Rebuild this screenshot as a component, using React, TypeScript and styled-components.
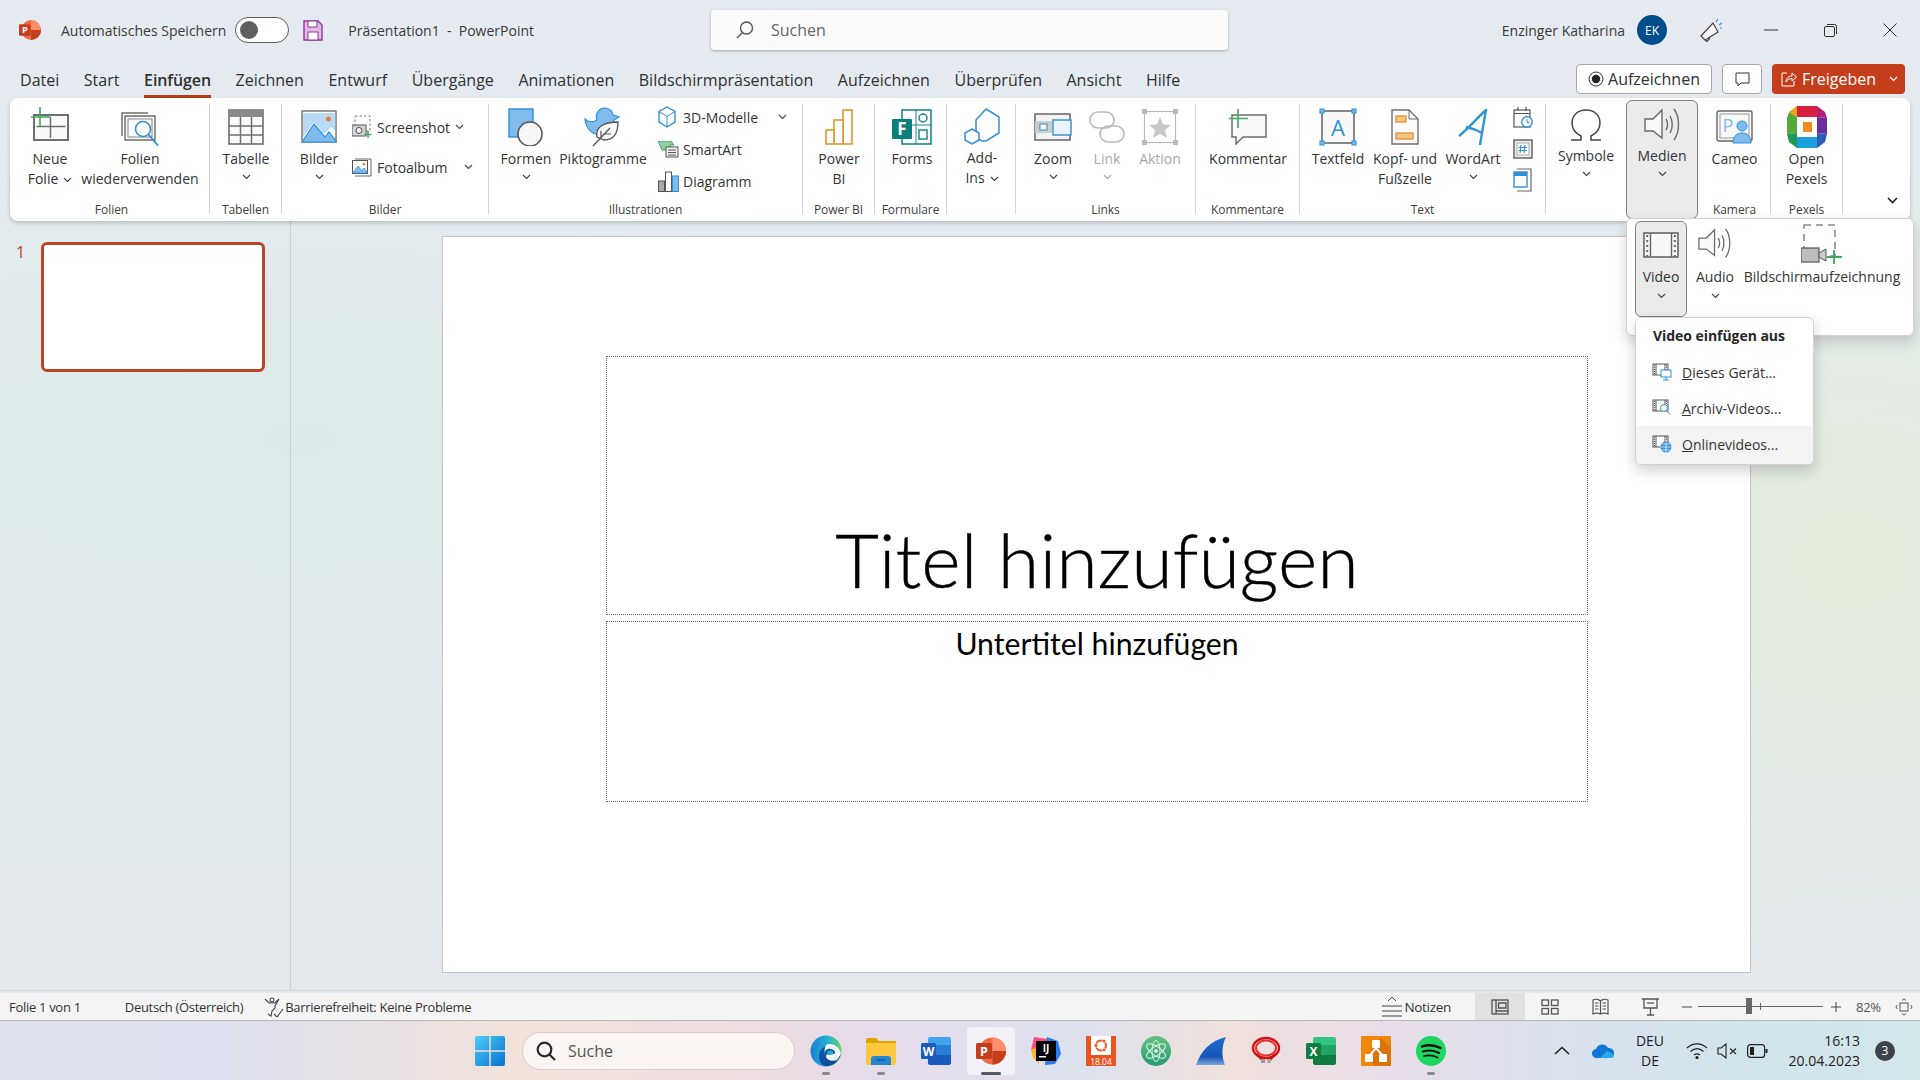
import React from 'react';
import styled, { createGlobalStyle } from 'styled-components';

const Global = createGlobalStyle`
  html, body { margin: 0; padding: 0; width: 1920px; height: 1080px; overflow: hidden; }
  * { box-sizing: border-box; }
`;

const UI = `"Open Sans", "Noto Sans", "Liberation Sans", sans-serif`;
const GRAY = '#6f6f6f';
const BLUE = '#2f8fd8';
const LBLUE = '#7fbcec';
const GREEN = '#3fa85f';

const Page = styled.div`
  position: relative;
  width: 1920px;
  height: 1080px;
  display: flex;
  flex-direction: column;
  overflow: hidden;
  font-family: ${UI};
  color: #2f2f2f;
  background:
    radial-gradient(ellipse 500px 420px at 1850px 560px, #e4ecdc 0%, rgba(228,236,220,0) 100%),
    radial-gradient(ellipse 800px 300px at 300px 440px, #deeaea 0%, rgba(222,234,234,0) 100%),
    linear-gradient(180deg, #e5ebf0 0%, #e1eaee 50%, #e3e8ec 100%);
`;

const TitleBar = styled.header`
  height: 60px;
  display: flex;
  align-items: center;
  padding-left: 19px;
  font-size: 14px;
  flex: none;
`;
const TitleText = styled.span<{ $ml?: number; $mr?: number }>`
  margin-left: ${p => p.$ml ?? 0}px;
  margin-right: ${p => p.$mr ?? 0}px;
  color: #3a3a3a;
  white-space: pre;
`;
const Toggle = styled.span`
  margin-left: 9px;
  width: 54px;
  height: 26px;
  border-radius: 13px;
  border: 1px solid #5c5c5c;
  background: #fff;
  padding: 3px 4px;
  display: flex;
`;
const ToggleKnob = styled.span`
  width: 18px;
  height: 18px;
  border-radius: 50%;
  background: #5f5f5f;
`;
const SaveSlot = styled.span`
  margin-left: 14px;
  display: flex;
`;
const SearchBox = styled.div`
  margin-left: 177px;
  width: 517px;
  height: 40px;
  background: #fbfbfb;
  border-radius: 4px;
  box-shadow: 0 1px 3px rgba(0,0,0,.28);
  display: flex;
  align-items: center;
  padding-left: 25px;
  gap: 17px;
  font-size: 16px;
  color: #666;
`;
const UserArea = styled.div`
  margin-left: auto;
  display: flex;
  align-items: center;
  padding-right: 23px;
`;
const UserName = styled.span`
  color: #3a3a3a;
`;
const Avatar = styled.span`
  margin-left: 12px;
  width: 30px;
  height: 30px;
  border-radius: 50%;
  background: #004e8c;
  color: #fff;
  display: flex;
  align-items: center;
  justify-content: center;
  font-size: 12px;
`;
const WinBtn = styled.span<{ $w: number; $ml: number }>`
  width: ${p => p.$w}px;
  margin-left: ${p => p.$ml}px;
  display: flex;
  justify-content: center;
`;

const TabRow = styled.nav`
  height: 38px;
  display: flex;
  align-items: flex-start;
  padding-left: 20px;
  flex: none;
`;
const Tab = styled.span<{ $on?: boolean }>`
  margin-top: 6px;
  margin-right: 24.5px;
  height: 29px;
  box-sizing: content-box;
  border-bottom: 3px solid ${p => (p.$on ? '#b83c1a' : 'transparent')};
  font-size: 16px;
  line-height: 28px;
  font-weight: ${p => (p.$on ? 600 : 400)};
  letter-spacing: ${p => (p.$on ? '-0.1px' : '0.02px')};
  color: #303030;
  white-space: nowrap;
`;
const TabActions = styled.div`
  margin-left: auto;
  margin-top: 4px;
  margin-right: 15px;
  display: flex;
  gap: 10px;
`;
const GhostBtn = styled.span<{ $w: number }>`
  width: ${p => p.$w}px;
  height: 30px;
  background: #fff;
  border: 1px solid #a9a9a9;
  border-radius: 4px;
  display: flex;
  align-items: center;
  justify-content: center;
  gap: 4px;
  font-size: 16px;
  color: #303030;
`;
const ShareBtn = styled.span`
  width: 133px;
  height: 30px;
  background: #c43e1c;
  border-radius: 4px;
  display: flex;
  align-items: center;
  padding-left: 9px;
  gap: 5px;
  font-size: 16px;
  color: #fff;
`;
const ShareChevron = styled.span`
  margin-left: auto;
  margin-right: 7px;
  display: flex;
`;

const Ribbon = styled.section`
  margin-left: 10px;
  width: 1900px;
  height: 123px;
  flex: none;
  background: #fff;
  border-radius: 8px;
  box-shadow: 0 2px 4px rgba(0,0,0,.2);
  display: flex;
  padding-top: 6px;
  position: relative;
  z-index: 1;
`;
const Group = styled.div<{ $w: number; $plain?: boolean }>`
  width: ${p => p.$w}px;
  height: 110px;
  flex: none;
  display: flex;
  flex-direction: column;
  border-right: ${p => (p.$plain ? 'none' : '1px solid #d4d4d4')};
`;
const GroupBody = styled.div<{ $pl?: number; $gap?: number }>`
  height: 100px;
  display: flex;
  align-items: flex-start;
  padding-left: ${p => p.$pl ?? 0}px;
  gap: ${p => p.$gap ?? 0}px;
`;
const GroupLabel = styled.div<{ $pl?: number }>`
  margin-top: 1px;
  padding-left: ${p => p.$pl ?? 0}px;
  height: 9px;
  line-height: 10px;
  font-size: 12px;
  letter-spacing: -0.05px;
  text-align: center;
  white-space: nowrap;
  color: #3d3d3d;
`;
const LargeBtn = styled.div<{ $w: number; $off?: boolean; $ml?: number; $active?: boolean }>`
  width: ${p => p.$w}px;
  flex: none;
  margin-left: ${p => p.$ml ?? 0}px;
  display: flex;
  flex-direction: column;
  align-items: center;
  font-size: 14px;
  line-height: 20px;
  text-align: center;
  white-space: nowrap;
  color: ${p => (p.$off ? '#a8a8a8' : '#333')};
  ${p => p.$active ? `
    margin-top: -4px;
    height: 119px;
    padding-top: 3px;
    background: #ebebeb;
    border: 1px solid #808080;
    border-radius: 6px;
  ` : ''}
`;
const IconBox = styled.div<{ $h?: number }>`
  height: ${p => p.$h ?? 45}px;
  display: flex;
  align-items: center;
  justify-content: center;
`;
const ChevronLine = styled.div<{ $h?: number }>`
  height: ${p => p.$h ?? 16}px;
  display: flex;
  align-items: center;
  justify-content: center;
`;
const InlineChev = styled.span<{ $ml?: number }>`
  display: inline-flex;
  margin-left: ${p => p.$ml ?? 5}px;
  vertical-align: middle;
`;
const SmallCol = styled.div<{ $gap: number; $pt: number; $ml?: number }>`
  display: flex;
  flex-direction: column;
  gap: ${p => p.$gap}px;
  padding-top: ${p => p.$pt}px;
  margin-left: ${p => p.$ml ?? 0}px;
`;
const SmallBtn = styled.div<{ $h: number; $w?: number }>`
  height: ${p => p.$h}px;
  width: ${p => (p.$w ? `${p.$w}px` : 'auto')};
  display: flex;
  align-items: center;
  font-size: 14px;
  white-space: nowrap;
  color: #333;
`;
const SmallIcon = styled.span`
  width: 25px;
  flex: none;
  display: flex;
`;
const PushRight = styled.span`
  margin-left: auto;
  display: flex;
`;
const CollapseSlot = styled.div`
  flex: 1;
  display: flex;
  justify-content: flex-end;
  align-items: flex-end;
  padding: 0 12px 10px 0;
  height: 110px;
`;

const Workspace = styled.main`
  height: 770px;
  flex: none;
  display: flex;
  border-bottom: 1px solid #cfd4d8;
`;
const ThumbPane = styled.aside`
  width: 291px;
  flex: none;
  border-right: 1px solid #cbcfd1;
  display: flex;
  align-items: flex-start;
  padding: 21px 0 0 16px;
  gap: 18px;
`;
const ThumbNum = styled.span`
  color: #c43e1c;
  font-size: 16px;
  line-height: 20px;
  width: 7px;
`;
const Thumb = styled.div`
  width: 224px;
  height: 130px;
  background: #fff;
  border: 3px solid #bc4526;
  border-radius: 6px;
`;
const Stage = styled.div`
  flex: 1;
  padding: 15px 0 0 151px;
`;
const Slide = styled.div`
  width: 1309px;
  height: 737px;
  background: #fff;
  border: 1px solid #c2c4c6;
  padding: 119px 0 0 163px;
  display: flex;
  flex-direction: column;
  gap: 6px;
`;
const Placeholder = styled.div<{ $h: number }>`
  width: 982px;
  height: ${p => p.$h}px;
  border: 1px dotted #666;
  display: flex;
  flex-direction: column;
  align-items: center;
  color: #000;
  white-space: nowrap;
`;
const SlideTitle = styled.div`
  margin-top: auto;
  margin-bottom: 10px;
  font-family: Lato, "Open Sans", sans-serif;
  font-weight: 300;
  font-size: 75.5px;
  line-height: 90px;
  -webkit-text-stroke: 0.4px #000;
`;
const SlideSub = styled.div`
  margin-top: 1px;
  font-family: Lato, "Open Sans", sans-serif;
  font-size: 30.2px;
  line-height: 40px;
`;

const StatusBar = styled.footer`
  margin-top: 2px;
  height: 28px;
  flex: none;
  background: #f4f4f4;
  border-bottom: 1px solid #b9b9b9;
  display: flex;
  align-items: center;
  font-size: 13px;
  letter-spacing: -0.3px;
  color: #333;
`;
const StatusText = styled.span<{ $ml: number }>`
  margin-left: ${p => p.$ml}px;
  white-space: nowrap;
  display: flex;
`;
const StatusRight = styled.div`
  margin-left: auto;
  display: flex;
  align-items: center;
  height: 100%;
  padding-right: 7px;
`;
const NotesBtn = styled.span`
  display: flex;
  align-items: center;
  gap: 2px;
  margin-right: 24px;
  font-size: 13.5px;
`;
const ViewBtn = styled.span<{ $on?: boolean }>`
  width: 50px;
  height: 100%;
  display: flex;
  align-items: center;
  justify-content: center;
  background: ${p => (p.$on ? '#e1e1e1' : 'transparent')};
`;
const ZoomTrack = styled.span`
  position: relative;
  margin: 0 8px 0 6px;
  width: 125px;
  height: 1px;
  background: #666;
`;
const ZoomThumb = styled.span`
  position: absolute;
  left: 48px;
  top: -8px;
  width: 6px;
  height: 16px;
  background: #666;
`;
const ZoomTick = styled.span`
  position: absolute;
  left: 62px;
  top: -3px;
  width: 1px;
  height: 7px;
  background: #666;
`;
const ZoomPct = styled.span`
  width: 24px;
  margin-left: 15px;
  margin-right: 15px;
  color: #555;
  white-space: nowrap;
`;
const Sign = styled.span<{ $ml?: number }>`
  display: flex;
  margin-left: ${p => p.$ml ?? 0}px;
`;

const Taskbar = styled.div`
  height: 59px;
  flex: none;
  display: flex;
  align-items: center;
  padding: 0 25px 0 466px;
  background: linear-gradient(90deg, #dfe0ee 0%, #dde0ee 12%, #f2e2da 27%, #efdde0 38%, #e6dcec 46%, #dde2ef 56%, #f0e1dc 64%, #e9dde9 72%, #dbe1ec 80%, #d0e4ec 92%, #d3e6ea 100%);
`;
const TaskTile = styled.span<{ $on?: boolean; $mr?: number }>`
  position: relative;
  width: 48px;
  height: 48px;
  margin-right: ${p => p.$mr ?? 7}px;
  flex: none;
  display: flex;
  align-items: center;
  justify-content: center;
  border-radius: 4px;
  background: ${p => (p.$on ? 'rgba(255,255,255,.55)' : 'transparent')};
`;
const RunDot = styled.span<{ $on?: boolean }>`
  position: absolute;
  left: 50%;
  bottom: 0;
  transform: translateX(-50%);
  width: ${p => (p.$on ? 20 : 8)}px;
  height: 3px;
  border-radius: 2px;
  background: ${p => (p.$on ? '#4f5b62' : '#84898c')};
`;
const TaskSearch = styled.div`
  width: 273px;
  height: 38px;
  border-radius: 19px;
  background: #faf4f3;
  border: 1px solid #d8cdcd;
  display: flex;
  align-items: center;
  padding-left: 13px;
  gap: 12px;
  font-size: 16px;
  color: #555;
  margin-right: 7px;
  flex: none;
`;
const Tray = styled.div`
  margin-left: auto;
  display: flex;
  align-items: center;
  color: #222;
`;
const TrayItem = styled.span<{ $w: number; $ml?: number }>`
  width: ${p => p.$w}px;
  margin-left: ${p => p.$ml ?? 0}px;
  display: flex;
  justify-content: center;
`;
const Lang = styled.span`
  width: 44px;
  margin-left: 5px;
  margin-right: 10px;
  text-align: center;
  font-size: 14px;
  line-height: 20px;
`;
const Clock = styled.span`
  width: 88px;
  text-align: right;
  font-size: 14px;
  line-height: 20px;
`;
const Badge = styled.span`
  margin-left: 15px;
  width: 20px;
  height: 20px;
  border-radius: 50%;
  background: #3c4248;
  color: #fff;
  font-size: 12px;
  display: flex;
  align-items: center;
  justify-content: center;
`;

const MediaFlyout = styled.div`
  position: absolute;
  left: 1626px;
  top: 218px;
  width: 288px;
  height: 118px;
  background: #fff;
  border: 1px solid #d2d2d2;
  border-radius: 6px;
  box-shadow: 0 6px 14px rgba(0,0,0,.16);
  display: flex;
  padding: 2px 0 0 8px;
  z-index: 2;
`;
const FlyBtn = styled.div<{ $w: number; $on?: boolean; $ml?: number }>`
  width: ${p => p.$w}px;
  margin-left: ${p => p.$ml ?? 0}px;
  height: 96px;
  display: flex;
  flex-direction: column;
  align-items: center;
  font-size: 14px;
  line-height: 20px;
  white-space: nowrap;
  color: #333;
  ${p => p.$on ? `
    background: #ebebeb;
    border: 1px solid #808080;
    border-radius: 6px;
  ` : ''}
`;
const VideoMenu = styled.div`
  position: absolute;
  left: 1635px;
  top: 317px;
  width: 179px;
  height: 148px;
  background: #fff;
  border: 1px solid #d2d2d2;
  border-radius: 6px;
  box-shadow: 0 6px 14px rgba(0,0,0,.18);
  z-index: 3;
  overflow: hidden;
`;
const MenuHead = styled.div`
  height: 36px;
  padding: 7px 0 0 17px;
  font-size: 14px;
  line-height: 22px;
  font-weight: 700;
  letter-spacing: -0.05px;
  color: #262626;
  white-space: nowrap;
`;
const MenuItem = styled.div<{ $on?: boolean }>`
  height: ${p => (p.$on ? 38 : 36)}px;
  padding: 0 0 ${p => (p.$on ? 2 : 0)}px 16px;
  display: flex;
  align-items: center;
  font-size: 14px;
  color: #333;
  background: ${p => (p.$on ? '#f3f3f3' : 'transparent')};
  white-space: nowrap;
`;
const MenuIcon = styled.span`
  width: 30px;
  display: flex;
  flex: none;
`;
const Accel = styled.u`
  text-decoration: underline;
`;

/* ---------- icons ---------- */
const Chev = ({ c = '#444' }: { c?: string }) => (
  <svg width="9" height="6" viewBox="0 0 9 6"><path d="M1 1l3.5 3.5L8 1" fill="none" stroke={c} strokeWidth="1.1" /></svg>
);
const NewSlide = () => (
  <svg width="38" height="39" viewBox="0 0 38 39" fill="none">
    <rect x="3" y="8" width="34" height="25" fill="#fafafa" stroke={GRAY} strokeWidth="2" />
    <path d="M5.5 19.5H34.5M19.5 10V31" stroke={GRAY} strokeWidth="1.5" />
    <path d="M9 0V20M0 10H19" stroke={GREEN} strokeWidth="1.6" />
  </svg>
);
const Reuse = () => (
  <svg width="38" height="39" viewBox="0 0 38 39" fill="none">
    <path d="M1 29V6H27" stroke={GRAY} strokeWidth="1.5" />
    <rect x="4" y="9" width="30" height="24" fill="#f6f6f6" stroke={GRAY} strokeWidth="1.5" />
    <rect x="7" y="12" width="24" height="18" fill="#fff" stroke="#888" strokeWidth="1" />
    <circle cx="22" cy="22" r="7.5" fill="#fff" stroke={BLUE} strokeWidth="1.6" />
    <path d="M27.5 27.5L37 38.5" stroke={BLUE} strokeWidth="1.8" />
  </svg>
);
const TableIcon = () => (
  <svg width="36" height="36" viewBox="0 0 36 36" fill="none">
    <rect x="1" y="1" width="34" height="34" fill="#fbfbfb" stroke={GRAY} strokeWidth="1.6" />
    <rect x="1" y="1" width="34" height="7" fill="#8a8a8a" />
    <path d="M12.5 8V35M23.5 8V35M1 17H35M1 26H35" stroke={GRAY} strokeWidth="1.5" />
  </svg>
);
const PictureIcon = () => (
  <svg width="36" height="33" viewBox="0 0 36 33" fill="none">
    <rect x="1" y="1" width="34" height="31" fill="#fff" stroke={GRAY} strokeWidth="1.4" />
    <path d="M1 32L13 14L24 27L28 22L35 31V32Z" fill={LBLUE} stroke={BLUE} strokeWidth="1.2" />
    <path d="M2 27L13 12L23 24L30 17L35 22V3H2Z" fill={LBLUE} opacity=".55" />
    <circle cx="27.5" cy="9" r="2.4" fill="#e8791e" />
  </svg>
);
const ScreenshotIcon = () => (
  <svg width="20" height="24" viewBox="0 0 20 24" fill="none">
    <rect x="3" y="1" width="15" height="15" stroke="#777" strokeDasharray="2.5 2" />
    <rect x="0" y="10" width="14" height="11" fill="#d4d4d4" stroke="#555" />
    <circle cx="7" cy="15.5" r="3" fill="#fff" stroke="#444" />
    <path d="M16 16V23M12.5 19.5H19.5" stroke={GREEN} strokeWidth="1.4" />
  </svg>
);
const AlbumIcon = () => (
  <svg width="20" height="19" viewBox="0 0 20 19" fill="none">
    <path d="M3 1H19V18H3" stroke="#666" />
    <rect x="0.5" y="2.5" width="15" height="13" fill="#fff" stroke="#555" />
    <path d="M1 15L6 8L10 13L12 10L15 14V15Z" fill={LBLUE} stroke={BLUE} strokeWidth=".8" />
    <circle cx="12" cy="6" r="1.2" fill="#e8791e" />
  </svg>
);
const ShapesIcon = () => (
  <svg width="37" height="38" viewBox="0 0 37 38" fill="none">
    <rect x="1" y="1" width="24" height="28" fill={LBLUE} stroke={BLUE} strokeWidth="1.4" />
    <circle cx="22" cy="26" r="12" fill="#f6f6f6" stroke="#555" strokeWidth="1.6" />
  </svg>
);
const PictoIcon = () => (
  <svg width="38" height="40" viewBox="0 0 38 40" fill="none">
    <path d="M1 12C5 16 10 15 13 13C11 8 14 1 21 1C26 1 29 5 29 8L35 10L30 13C30 22 26 28 18 28C8 28 2 22 1 12Z" fill={LBLUE} stroke={BLUE} strokeWidth="1.2" />
    <path d="M13 30C11 20 20 15 34 15C34 27 30 33 20 33Z" fill="#f8f8f8" stroke="#555" strokeWidth="1.3" />
    <path d="M9 39L26 21M17 30V24M20 27H27" stroke="#555" strokeWidth="1.2" />
  </svg>
);
const CubeIcon = () => (
  <svg width="18" height="22" viewBox="0 0 18 22" fill="none" stroke={BLUE} strokeWidth="1.4">
    <path d="M9 1L17 5.5V16L9 21L1 16V5.5Z" /><path d="M1 5.5L9 10.5L17 5.5M9 10.5V21" strokeWidth="1" />
  </svg>
);
const SmartArtIcon = () => (
  <svg width="21" height="17" viewBox="0 0 21 17" fill="none">
    <path d="M0 0H13L16 4H12L13 9H4Z" fill="#8fce9f" stroke={GREEN} />
    <rect x="8" y="6" width="12" height="10" fill="#f4f4f4" stroke="#555" />
    <path d="M10 9H18M10 11.5H18M10 14H18" stroke="#555" />
  </svg>
);
const ChartIcon = () => (
  <svg width="21" height="21" viewBox="0 0 21 21" fill="none">
    <rect x="0.5" y="10" width="6" height="10.5" fill="#aaa" stroke="#555" />
    <rect x="7.5" y="1" width="6" height="19.5" fill="#fff" stroke="#555" />
    <rect x="14.5" y="5" width="6" height="15.5" fill={LBLUE} stroke={BLUE} />
  </svg>
);
const PowerBI = () => (
  <svg width="28" height="36" viewBox="0 0 28 36" fill="#fff" stroke="#e0982f" strokeWidth="1.6">
    <rect x="18" y="1" width="9" height="34" />
    <rect x="9" y="11" width="9" height="24" />
    <rect x="1" y="21" width="8" height="14" />
  </svg>
);
const FormsIcon = () => (
  <svg width="40" height="36" viewBox="0 0 40 36" fill="none">
    <rect x="10" y="1" width="29" height="34" fill="#fff" stroke="#1e8a85" strokeWidth="1.6" />
    <path d="M10 16H39M24 1V35" stroke="#1e8a85" strokeWidth="1" />
    <circle cx="31" cy="9" r="4" stroke="#1e8a85" strokeWidth="1.5" />
    <rect x="27" y="21" width="8" height="9" stroke="#1e8a85" strokeWidth="1.5" />
    <rect x="0" y="10" width="20" height="20" rx="1" fill="#07807e" />
    <text x="10" y="26" textAnchor="middle" fontFamily="Open Sans, sans-serif" fontSize="17" fontWeight="700" fill="#fff">F</text>
  </svg>
);
const AddIns = () => (
  <svg width="37" height="37" viewBox="0 0 37 37" fill="#fff" stroke={BLUE} strokeWidth="1.5">
    <path d="M22 1L35 9V25L22 33H18L12 29V12Z" />
    <path d="M8 21L15 25V32L8 36L1 32V25Z" />
  </svg>
);
const ZoomIcon = () => (
  <svg width="38" height="28" viewBox="0 0 38 28" fill="none">
    <rect x="1" y="1" width="35" height="26" fill="#f3f3f3" stroke={GRAY} strokeWidth="1.6" />
    <path d="M1 8L18 8L18 20L1 20" fill="#ccc" />
    <rect x="6" y="11" width="7" height="6" fill="#fff" stroke={BLUE} />
    <rect x="19" y="7" width="18" height="15" fill="#eaf4fc" stroke={BLUE} strokeWidth="1.4" />
  </svg>
);
const LinkIcon = () => (
  <svg width="36" height="32" viewBox="0 0 36 32" fill="none" stroke="#bbb" strokeWidth="1.6">
    <rect x="1" y="1" width="24" height="16" rx="8" />
    <rect x="11" y="15" width="24" height="16" rx="8" />
  </svg>
);
const ActionIcon = () => (
  <svg width="36" height="36" viewBox="0 0 36 36" fill="none">
    <rect x="2.5" y="2.5" width="31" height="31" stroke="#bbb" strokeWidth="1.2" />
    <path d="M0 0h5v5H0z M31 0h5v5h-5z M0 31h5v5H0z M31 31h5v5h-5z" fill="#bbb" />
    <path d="M18 8L21 15.5L29 16L23 21L25 29L18 25L11 29L13 21L7 16L15 15.5Z" fill="#c8c8c8" />
  </svg>
);
const CommentIcon = () => (
  <svg width="38" height="36" viewBox="0 0 38 36" fill="none">
    <path d="M3 6H37V28H14L7 35V28H3Z" fill="#fafafa" stroke={GRAY} strokeWidth="1.5" />
    <path d="M9 0V19M0 9.5H19" stroke={GREEN} strokeWidth="1.6" />
  </svg>
);
const TextBoxIcon = () => (
  <svg width="38" height="38" viewBox="0 0 38 38" fill="none">
    <rect x="3" y="3" width="32" height="32" fill="#f9f9f9" stroke="#555" strokeWidth="1.4" />
    <g fill={LBLUE} stroke={BLUE}><rect x="1" y="1" width="4" height="4" /><rect x="33" y="1" width="4" height="4" /><rect x="1" y="33" width="4" height="4" /><rect x="33" y="33" width="4" height="4" /></g>
    <text x="19" y="28" textAnchor="middle" fontFamily="Open Sans, sans-serif" fontSize="22" fill={BLUE}>A</text>
  </svg>
);
const HeaderIcon = () => (
  <svg width="28" height="36" viewBox="0 0 28 36" fill="none">
    <path d="M1 1H18L27 10V35H1Z" fill="#fbfbfb" stroke={GRAY} strokeWidth="1.4" />
    <path d="M18 1V10H27" stroke={GRAY} />
    <rect x="5" y="7" width="10" height="6" fill="#f6c680" stroke="#e0892a" strokeWidth="1.2" />
    <rect x="5" y="24" width="17" height="6" fill="#f6c680" stroke="#e0892a" strokeWidth="1.2" />
  </svg>
);
const WordArtIcon = () => (
  <svg width="30" height="36" viewBox="0 0 30 36" fill="none" stroke="#2e97d6" strokeWidth="2.4">
    <path d="M1 27C10 20 20 8 28 1C26 12 24 24 22 36" /><path d="M8 18C13 19 19 21 24 24" />
  </svg>
);
const CalendarIcon = () => (
  <svg width="20" height="22" viewBox="0 0 20 22" fill="none">
    <rect x="1" y="3" width="16" height="17" fill="#fff" stroke="#555" strokeWidth="1.2" />
    <path d="M1 6.5H17M5 0V4M13 0V4" stroke="#555" strokeWidth="1.2" />
    <circle cx="14" cy="15" r="5.2" fill="#fff" stroke={BLUE} strokeWidth="1.4" />
    <path d="M14 12V15.5H16.5" stroke={BLUE} />
  </svg>
);
const SlideNumIcon = () => (
  <svg width="20" height="20" viewBox="0 0 20 20" fill="none">
    <rect x="1" y="1" width="18" height="18" fill="#eee" stroke={GRAY} strokeWidth="1.6" />
    <rect x="4" y="4" width="12" height="12" fill="#fff" stroke="#aaa" />
    <path d="M8 6L7 14M12 6L11 14M5.5 8.5H14M5.5 11.5H14" stroke={BLUE} strokeWidth="1.2" />
  </svg>
);
const ObjectIcon = () => (
  <svg width="19" height="24" viewBox="0 0 19 24" fill="none">
    <path d="M4 1H18V23H4" stroke="#666" strokeWidth="1.2" />
    <rect x="1" y="4" width="13" height="15" fill="#fff" stroke={BLUE} strokeWidth="1.4" />
    <rect x="1" y="4" width="13" height="4" fill={BLUE} />
  </svg>
);
const OmegaIcon = () => (
  <svg width="32" height="32" viewBox="0 0 32 32" fill="none" stroke="#444" strokeWidth="1.5">
    <path d="M1 31H11V27C5 24 2 19 2 14C2 6 8 1 16 1C24 1 30 6 30 14C30 19 27 24 21 27V31H31" />
  </svg>
);
const SpeakerIcon = ({ s = 1 }: { s?: number }) => (
  <svg width={36 * s} height={36 * s} viewBox="0 0 36 36" fill="none" stroke="#6a6a6a" strokeWidth="1.4">
    <path d="M1 12H9L18 3V31L9 24H1Z" fill="#fafafa" />
    <path d="M22 12C24 15 24 20 22 23M26 9C29 14 29 21 26 26M30 2C36 10 36 25 30 33" />
  </svg>
);
const CameoIcon = () => (
  <svg width="38" height="34" viewBox="0 0 38 34" fill="none">
    <rect x="1" y="1" width="35" height="30" rx="2" fill="#f8f8f8" stroke="#666" strokeWidth="1.4" />
    <rect x="4" y="4" width="29" height="24" stroke="#999" />
    <text x="12" y="22" textAnchor="middle" fontFamily="Open Sans, sans-serif" fontSize="18" fill={LBLUE}>P</text>
    <circle cx="26" cy="16" r="5" fill={LBLUE} stroke={BLUE} />
    <path d="M17 33C17 26 21 23 26 23C31 23 35 26 35 33Z" fill={LBLUE} stroke={BLUE} />
  </svg>
);
const PexelsIcon = () => (
  <svg width="40" height="42" viewBox="0 0 40 42">
    <path d="M10 0H30L30 11H10Z" fill="#d81f3f" />
    <path d="M10 0L2 6L10 11Z" fill="#f0a21a" />
    <path d="M2 6L0 12V28L10 27V11Z" fill="#57a93a" />
    <path d="M0 28L2 36L10 42L12 31L10 27Z" fill="#1b9a59" />
    <path d="M10 42H30L30 31H10Z" fill="#1a9fdc" />
    <path d="M30 42L38 36L40 28L30 27Z" fill="#2d5cb8" />
    <path d="M40 28V12L30 11V27Z" fill="#6a2da0" />
    <path d="M30 0L38 6L40 12L30 11Z" fill="#b81f74" />
    <rect x="10" y="11" width="20" height="20" fill="#fff" />
    <rect x="16" y="16" width="9" height="10" fill="#f58a1f" />
  </svg>
);
const FilmIcon = () => (
  <svg width="36" height="26" viewBox="0 0 36 26" fill="none">
    <rect x="1" y="1" width="34" height="24" fill="#f7f7f7" stroke="#666" strokeWidth="1.6" />
    <path d="M7.5 1V25M28.5 1V25" stroke="#666" strokeWidth="1.4" />
    <path d="M4.2 3V25M31.8 3V25" stroke="#666" strokeWidth="2" strokeDasharray="2 3" />
  </svg>
);
const RecordIcon = () => (
  <svg width="42" height="40" viewBox="0 0 42 40" fill="none">
    <rect x="3" y="1" width="31" height="31" stroke="#8a8a8a" strokeWidth="1.6" strokeDasharray="7 5" />
    <rect x="0" y="24" width="18" height="14" fill="#bdbdbd" stroke="#555" strokeWidth="1.2" />
    <path d="M18 29L25 25V37L18 33Z" fill="#ccc" stroke="#555" />
    <path d="M33 26V40M26 33H41" stroke={GREEN} strokeWidth="1.8" />
  </svg>
);
const MiniFilm = ({ children }: { children: React.ReactNode }) => (
  <svg width="20" height="18" viewBox="0 0 20 18" fill="none">
    <rect x="1" y="1" width="15" height="11" fill="#fff" stroke="#555" />
    <path d="M4 1V12M13 1V12" stroke="#555" />
    <path d="M2.5 2V12M14.5 2V12" stroke="#555" strokeDasharray="1 1" />
    {children}
  </svg>
);
const Magnifier = ({ c = '#555', size = 18 }: { c?: string; size?: number }) => (
  <svg width={size} height={size} viewBox="0 0 18 18" fill="none" stroke={c} strokeWidth="1.4">
    <circle cx="10.5" cy="7" r="6" /><path d="M6.5 11.5L1 17" />
  </svg>
);

const WinLogo = () => (
  <svg width="30" height="30" viewBox="0 0 30 30">
    <defs><linearGradient id="w" x1="0" y1="0" x2="1" y2="1"><stop offset="0" stopColor="#4ecbfa" /><stop offset="1" stopColor="#0573cf" /></linearGradient></defs>
    <path d="M0 2a2 2 0 012-2H14.3V14.3H0zM15.7 0H28a2 2 0 012 2V14.3H15.7zM0 15.7H14.3V30H2a2 2 0 01-2-2zM15.7 15.7H30V28a2 2 0 01-2 2H15.7z" fill="url(#w)" />
  </svg>
);
const TaskSearchIcon = () => (
  <svg width="20" height="20" viewBox="0 0 20 20" fill="none" stroke="#2b2b2b" strokeWidth="2.2">
    <circle cx="8.5" cy="8.5" r="6.8" /><path d="M13.5 13.5L19 19" />
  </svg>
);
const EdgeLogo = () => (
  <svg width="32" height="32" viewBox="0 0 32 32">
    <defs>
      <linearGradient id="e1" x1="0" y1="0" x2="1" y2="0"><stop offset="0" stopColor="#1a7fd4" /><stop offset=".55" stopColor="#27b0d8" /><stop offset="1" stopColor="#5fd85a" /></linearGradient>
      <linearGradient id="e2" x1="0" y1="0" x2="1" y2="1"><stop offset="0" stopColor="#0d5fb0" /><stop offset="1" stopColor="#0b3f86" /></linearGradient>
    </defs>
    <circle cx="16" cy="16" r="15.5" fill="url(#e1)" />
    <path d="M9 21C9 14 14 11 19 11C25 11 30 14 31 19C29 26 24 31 16 31C12 31 9 27 9 21Z" fill="url(#e2)" />
    <path d="M15 20C14 16 17 13 21 14C25 15 26 18 24 19H18C17 19 16 20 16 21C16 25 22 27 27 25L31 19C30 12 24 9 19 9C13 9 15 20 15 20Z" fill="#fff" opacity=".95" />
    <path d="M17 17C18 15 22 15 23 17C24 18.5 23 20 21 20H18Z" fill="#27b0d8" />
  </svg>
);
const FolderLogo = () => (
  <svg width="30" height="28" viewBox="0 0 30 28">
    <path d="M0 3a2 2 0 012-2H10L13 4H30V8H0Z" fill="#e2a202" />
    <path d="M0 6H30V26a2 2 0 01-2 2H2a2 2 0 01-2-2Z" fill="#fdc83c" />
    <path d="M5 28V22a3 3 0 013-3H22a3 3 0 013 3V28Z" fill="#2585cf" />
    <path d="M11 23H19" stroke="#0b4f8a" strokeWidth="1.2" />
  </svg>
);
const OfficeTile = ({ letter, dark, c1, c2, c3 }: { letter: string; dark: string; c1: string; c2: string; c3: string }) => (
  <svg width="30" height="28" viewBox="0 0 30 28">
    <path d="M7 2a2 2 0 012-2H28a2 2 0 012 2V8H7Z" fill={c1} />
    <rect x="7" y="8" width="23" height="10" fill={c2} />
    <path d="M7 18H30V26a2 2 0 01-2 2H9a2 2 0 01-2-2Z" fill={c3} />
    <rect x="0" y="6" width="15" height="16" rx="1.5" fill={dark} />
    <text x="7.5" y="18.5" textAnchor="middle" fontFamily="Open Sans, sans-serif" fontWeight="700" fontSize="12" fill="#fff">{letter}</text>
  </svg>
);
const PptLogo = ({ size = 30 }: { size?: number }) => (
  <svg width={size} height={size} viewBox="0 0 30 30">
    <circle cx="16.5" cy="15" r="13.5" fill="#ed6c47" />
    <path d="M16.5 15H30A13.5 13.5 0 0116.5 28.5Z" fill="#c43e1c" />
    <path d="M16.5 1.5A13.5 13.5 0 0130 15H16.5Z" fill="#ff8f6b" />
    <rect x="0" y="7" width="16" height="16" rx="1.5" fill="#c43e1c" />
    <text x="8" y="19.5" textAnchor="middle" fontFamily="Open Sans, sans-serif" fontWeight="700" fontSize="12.5" fill="#fff">P</text>
  </svg>
);
const IJLogo = () => (
  <svg width="30" height="30" viewBox="0 0 30 30">
    <path d="M3 1L17 3L10 16L0 14Z" fill="#fc4f7f" />
    <path d="M0 13L8 12L8 28L2 22Z" fill="#fbb929" />
    <path d="M16 1L27 5L30 18L24 28L14 29Z" fill="#2a7cf0" />
    <rect x="5" y="5" width="20" height="20" fill="#000" />
    <text x="15" y="16" textAnchor="middle" fontFamily="Open Sans, sans-serif" fontWeight="700" fontSize="10" fill="#fff">IJ</text>
    <rect x="8" y="20" width="7" height="1.5" fill="#fff" />
  </svg>
);
const UbuntuLogo = () => (
  <svg width="30" height="30" viewBox="0 0 30 30">
    <rect width="30" height="30" fill="#e95420" />
    <rect x="5" y="0" width="20" height="19" fill="#fff" />
    <circle cx="15" cy="9.5" r="5" fill="none" stroke="#e95420" strokeWidth="2" />
    <circle cx="10" cy="9.5" r="1.8" fill="#e95420" stroke="#fff" strokeWidth=".6" />
    <circle cx="18" cy="5" r="1.8" fill="#e95420" stroke="#fff" strokeWidth=".6" />
    <circle cx="18" cy="14" r="1.8" fill="#e95420" stroke="#fff" strokeWidth=".6" />
    <text x="15" y="28.5" textAnchor="middle" fontFamily="Open Sans, sans-serif" fontSize="8.5" fill="#fff">18.04</text>
  </svg>
);
const AtomLogo = () => (
  <svg width="30" height="30" viewBox="0 0 30 30" fill="none">
    <defs><linearGradient id="a" x1="0" y1="0" x2="0" y2="1"><stop offset="0" stopColor="#66c07e" /><stop offset="1" stopColor="#249d78" /></linearGradient></defs>
    <circle cx="15" cy="15" r="15" fill="url(#a)" />
    <g stroke="#dff3e4" strokeWidth="1">
      <ellipse cx="15" cy="15" rx="11" ry="4.5" transform="rotate(35 15 15)" />
      <ellipse cx="15" cy="15" rx="11" ry="4.5" transform="rotate(-35 15 15)" />
      <ellipse cx="15" cy="15" rx="4" ry="10.5" />
    </g>
    <circle cx="15" cy="15" r="1.8" fill="#fff" />
  </svg>
);
const SharkLogo = () => (
  <svg width="30" height="30" viewBox="0 0 30 30">
    <defs><linearGradient id="s" x1="0" y1="0" x2="0" y2="1"><stop offset="0" stopColor="#1e6dd6" /><stop offset=".7" stopColor="#1754b4" /><stop offset="1" stopColor="#7ba6dd" /></linearGradient></defs>
    <path d="M0 29C5 15 14 5 30 1C26 9 25 19 29 29Z" fill="url(#s)" />
  </svg>
);
const CableLogo = () => (
  <svg width="30" height="30" viewBox="0 0 30 30" fill="none">
    <ellipse cx="15" cy="12" rx="13" ry="10" stroke="#d51414" strokeWidth="2.4" />
    <ellipse cx="15" cy="12" rx="10" ry="7.5" stroke="#e83030" strokeWidth="2" />
    <path d="M6 18L12 25M24 18L18 25" stroke="#c81010" strokeWidth="2.4" />
    <rect x="10" y="23" width="4" height="4" fill="#999" /><rect x="16" y="23" width="4" height="4" fill="#aaa" />
  </svg>
);
const DrawLogo = () => (
  <svg width="30" height="30" viewBox="0 0 30 30">
    <rect width="30" height="30" rx="1" fill="#f08705" />
    <path d="M20 2L30 12V30H14L5 21Z" fill="#d9730a" />
    <path d="M15 12L8 20M15 12L22 20" stroke="#fff" strokeWidth="2" />
    <rect x="11" y="4" width="8" height="8" rx="1" fill="#fff" />
    <rect x="4" y="18" width="8" height="8" rx="1" fill="#fff" />
    <rect x="18" y="18" width="8" height="8" rx="1" fill="#fff" />
  </svg>
);
const SpotifyLogo = () => (
  <svg width="30" height="30" viewBox="0 0 30 30" fill="none">
    <circle cx="15" cy="15" r="15" fill="#1ed760" />
    <g stroke="#111" strokeLinecap="round">
      <path d="M6 10.5C12 8.5 19 9 24.5 12" strokeWidth="2.4" />
      <path d="M7 15.5C12 14 18.5 14.5 23 17" strokeWidth="2.1" />
      <path d="M8 20C12 19 17.5 19.5 21.5 21.5" strokeWidth="1.8" />
    </g>
  </svg>
);

const tasks: [React.ReactNode, boolean?, boolean?][] = [
  [<EdgeLogo />, true],
  [<FolderLogo />, true],
  [<OfficeTile letter="W" dark="#1a5cbd" c1="#41a5ee" c2="#2b7cd3" c3="#185abd" />],
  [<PptLogo />, true, true],
  [<IJLogo />],
  [<UbuntuLogo />],
  [<AtomLogo />],
  [<SharkLogo />],
  [<CableLogo />],
  [<OfficeTile letter="X" dark="#107c41" c1="#33c481" c2="#21a366" c3="#107c41" />],
  [<DrawLogo />],
  [<SpotifyLogo />, true],
];

const tabNames = ['Datei', 'Start', 'Einfügen', 'Zeichnen', 'Entwurf', 'Übergänge', 'Animationen', 'Bildschirmpräsentation', 'Aufzeichnen', 'Überprüfen', 'Ansicht', 'Hilfe'];

export default function App() {
  return (
    <Page>
      <Global />
      <TitleBar>
        <PptLogo size={22} />
        <TitleText $ml={20}>Automatisches Speichern</TitleText>
        <Toggle><ToggleKnob /></Toggle>
        <SaveSlot>
          <svg width="20" height="21" viewBox="0 0 20 21" fill="none">
            <path d="M1 1H15L19 5V20H1Z" fill="#e4b8e6" stroke="#8d3a94" strokeWidth="1.4" />
            <rect x="5" y="1" width="9" height="6" fill="#fff" stroke="#8d3a94" />
            <rect x="5" y="12" width="10" height="8" fill="#fff" stroke="#8d3a94" />
          </svg>
        </SaveSlot>
        <TitleText $ml={25}>Präsentation1  -  PowerPoint</TitleText>
        <SearchBox><Magnifier size={18} />Suchen</SearchBox>
        <UserArea>
          <UserName>Enzinger Katharina</UserName>
          <Avatar>EK</Avatar>
          <WinBtn $w={22} $ml={33}>
            <svg width="22" height="24" viewBox="0 0 22 24" fill="none" stroke="#444" strokeWidth="1.2">
              <path d="M1 18L13 5L18 14L5 22Z" fill="#fafafa" /><path d="M5 22L7 23.5L10 20" />
              <path d="M16 4L18 1M19 7L22 5M20 10L22 10" stroke="#2f8fd8" />
            </svg>
          </WinBtn>
          <WinBtn $w={14} $ml={42}>
            <svg width="14" height="2" viewBox="0 0 14 2"><path d="M0 1H14" stroke="#333" /></svg>
          </WinBtn>
          <WinBtn $w={13} $ml={46}>
            <svg width="13" height="13" viewBox="0 0 13 13" fill="none" stroke="#333"><rect x=".5" y="2.5" width="10" height="10" rx="1.5" /><path d="M3 .5H10.5A2 2 0 0112.5 2.5V10" /></svg>
          </WinBtn>
          <WinBtn $w={14} $ml={46}>
            <svg width="14" height="14" viewBox="0 0 14 14" stroke="#333"><path d="M.5.5L13.5 13.5M13.5.5L.5 13.5" /></svg>
          </WinBtn>
        </UserArea>
      </TitleBar>

      <TabRow>
        {tabNames.map(t => <Tab key={t} $on={t === 'Einfügen'}>{t}</Tab>)}
        <TabActions>
          <GhostBtn $w={136}>
            <svg width="16" height="16" viewBox="0 0 16 16"><circle cx="8" cy="8" r="7" fill="none" stroke="#333" /><circle cx="8" cy="8" r="4.2" fill="#222" /></svg>
            Aufzeichnen
          </GhostBtn>
          <GhostBtn $w={40}>
            <svg width="15" height="15" viewBox="0 0 15 15" fill="none" stroke="#333"><path d="M1 1H14V11H6L3 14V11H1Z" /></svg>
          </GhostBtn>
          <ShareBtn>
            <svg width="16" height="16" viewBox="0 0 16 16" fill="none" stroke="#fff"><path d="M6 2H1V15H13V10" /><path d="M5 11C5 7 8 5 11 5V2L15.5 6L11 10V7.5C8 7.5 6 9 5 11Z" /></svg>
            Freigeben
            <ShareChevron><Chev c="#fff" /></ShareChevron>
          </ShareBtn>
        </TabActions>
      </TabRow>

      <Ribbon>
        <Group $w={200}>
          <GroupBody $pl={12} $gap={2}>
            <LargeBtn $w={56}><IconBox><NewSlide /></IconBox>Neue<div>Folie<InlineChev><Chev /></InlineChev></div></LargeBtn>
            <LargeBtn $w={120}><IconBox><Reuse /></IconBox>Folien<div>wiederverwenden</div></LargeBtn>
          </GroupBody>
          <GroupLabel $pl={4}>Folien</GroupLabel>
        </Group>
        <Group $w={72}>
          <GroupBody $pl={6}>
            <LargeBtn $w={60}><IconBox><TableIcon /></IconBox>Tabelle<ChevronLine><Chev /></ChevronLine></LargeBtn>
          </GroupBody>
          <GroupLabel>Tabellen</GroupLabel>
        </Group>
        <Group $w={207}>
          <GroupBody $pl={12} $gap={8}>
            <LargeBtn $w={50}><IconBox><PictureIcon /></IconBox>Bilder<ChevronLine><Chev /></ChevronLine></LargeBtn>
            <SmallCol $gap={14} $pt={10}>
              <SmallBtn $h={26}><SmallIcon><ScreenshotIcon /></SmallIcon>Screenshot<InlineChev><Chev /></InlineChev></SmallBtn>
              <SmallBtn $h={26} $w={121}><SmallIcon><AlbumIcon /></SmallIcon>Fotoalbum<PushRight><Chev /></PushRight></SmallBtn>
            </SmallCol>
          </GroupBody>
          <GroupLabel>Bilder</GroupLabel>
        </Group>
        <Group $w={314}>
          <GroupBody $pl={11} $gap={3}>
            <LargeBtn $w={52}><IconBox><ShapesIcon /></IconBox>Formen<ChevronLine><Chev /></ChevronLine></LargeBtn>
            <LargeBtn $w={96}><IconBox><PictoIcon /></IconBox>Piktogramme</LargeBtn>
            <SmallCol $gap={8} $pt={1} $ml={4}>
              <SmallBtn $h={24} $w={129}><SmallIcon><CubeIcon /></SmallIcon>3D-Modelle<PushRight><Chev /></PushRight></SmallBtn>
              <SmallBtn $h={24}><SmallIcon><SmartArtIcon /></SmallIcon>SmartArt</SmallBtn>
              <SmallBtn $h={24}><SmallIcon><ChartIcon /></SmallIcon>Diagramm</SmallBtn>
            </SmallCol>
          </GroupBody>
          <GroupLabel>Illustrationen</GroupLabel>
        </Group>
        <Group $w={72}>
          <GroupBody $pl={6}><LargeBtn $w={60}><IconBox><PowerBI /></IconBox>Power<div>BI</div></LargeBtn></GroupBody>
          <GroupLabel>Power BI</GroupLabel>
        </Group>
        <Group $w={72}>
          <GroupBody $pl={7}><LargeBtn $w={60}><IconBox><FormsIcon /></IconBox>Forms</LargeBtn></GroupBody>
          <GroupLabel>Formulare</GroupLabel>
        </Group>
        <Group $w={69}>
          <GroupBody $pl={5}><LargeBtn $w={60}><IconBox $h={44}><AddIns /></IconBox>Add-<div>Ins<InlineChev><Chev /></InlineChev></div></LargeBtn></GroupBody>
          <GroupLabel>&nbsp;</GroupLabel>
        </Group>
        <Group $w={180}>
          <GroupBody $pl={8}>
            <LargeBtn $w={58}><IconBox><ZoomIcon /></IconBox>Zoom<ChevronLine><Chev /></ChevronLine></LargeBtn>
            <LargeBtn $w={50} $off><IconBox><LinkIcon /></IconBox>Link<ChevronLine><Chev c="#aaa" /></ChevronLine></LargeBtn>
            <LargeBtn $w={56} $off><IconBox><ActionIcon /></IconBox>Aktion</LargeBtn>
          </GroupBody>
          <GroupLabel>Links</GroupLabel>
        </Group>
        <Group $w={104}>
          <GroupBody $pl={7}><LargeBtn $w={90}><IconBox><CommentIcon /></IconBox>Kommentar</LargeBtn></GroupBody>
          <GroupLabel>Kommentare</GroupLabel>
        </Group>
        <Group $w={246}>
          <GroupBody $pl={8} $gap={2}>
            <LargeBtn $w={60}><IconBox><TextBoxIcon /></IconBox>Textfeld</LargeBtn>
            <LargeBtn $w={70}><IconBox><HeaderIcon /></IconBox>Kopf- und<div>Fußzeile</div></LargeBtn>
            <LargeBtn $w={62}><IconBox><WordArtIcon /></IconBox>WordArt<ChevronLine><Chev /></ChevronLine></LargeBtn>
            <SmallCol $gap={10} $pt={3} $ml={7}>
              <SmallBtn $h={21}><CalendarIcon /></SmallBtn>
              <SmallBtn $h={21}><SlideNumIcon /></SmallBtn>
              <SmallBtn $h={21}><ObjectIcon /></SmallBtn>
            </SmallCol>
          </GroupBody>
          <GroupLabel>Text</GroupLabel>
        </Group>
        <Group $w={153} $plain>
          <GroupBody $pl={0}>
            <LargeBtn $w={80}><IconBox $h={42}><OmegaIcon /></IconBox>Symbole<ChevronLine><Chev /></ChevronLine></LargeBtn>
            <LargeBtn $w={72} $active><IconBox $h={42}><SpeakerIcon /></IconBox>Medien<ChevronLine><Chev /></ChevronLine></LargeBtn>
          </GroupBody>
        </Group>
        <Group $w={72}>
          <GroupBody><LargeBtn $w={71}><IconBox><CameoIcon /></IconBox>Cameo</LargeBtn></GroupBody>
          <GroupLabel>Kamera</GroupLabel>
        </Group>
        <Group $w={72}>
          <GroupBody><LargeBtn $w={71}><IconBox><PexelsIcon /></IconBox>Open<div>Pexels</div></LargeBtn></GroupBody>
          <GroupLabel>Pexels</GroupLabel>
        </Group>
        <CollapseSlot>
          <svg width="11" height="7" viewBox="0 0 11 7"><path d="M1 1l4.5 4.5L10 1" fill="none" stroke="#222" strokeWidth="1.6" /></svg>
        </CollapseSlot>
      </Ribbon>

      <Workspace>
        <ThumbPane>
          <ThumbNum>1</ThumbNum>
          <Thumb />
        </ThumbPane>
        <Stage>
          <Slide>
            <Placeholder $h={259}><SlideTitle>Titel hinzufügen</SlideTitle></Placeholder>
            <Placeholder $h={181}><SlideSub>Untertitel hinzufügen</SlideSub></Placeholder>
          </Slide>
        </Stage>
      </Workspace>

      <StatusBar>
        <StatusText $ml={9}>Folie 1 von 1</StatusText>
        <StatusText $ml={44}>Deutsch (Österreich)</StatusText>
        <StatusText $ml={21}>
          <svg width="20" height="20" viewBox="0 0 20 20" fill="none" stroke="#444" strokeWidth="1.1">
            <circle cx="8" cy="3" r="2" /><path d="M1 2L5 6H11L15 2L11 9V11L8 14L7 19L4 17M10 17L13 20L19 12" />
          </svg>
        </StatusText>
        <StatusText $ml={1}>Barrierefreiheit: Keine Probleme</StatusText>
        <StatusRight>
          <NotesBtn>
            <svg width="20" height="22" viewBox="0 0 20 22" fill="none" stroke="#444"><path d="M6 5L10 1L14 5M0 10H20M0 15H20M0 20H20" /></svg>
            Notizen
          </NotesBtn>
          <ViewBtn $on>
            <svg width="18" height="16" viewBox="0 0 18 16" fill="none" stroke="#555" strokeWidth="1.3"><rect x="1" y="1" width="16" height="14" /><path d="M5 1V15M7.5 4H15V9H7.5Z M5 12H17" /></svg>
          </ViewBtn>
          <ViewBtn>
            <svg width="18" height="16" viewBox="0 0 18 16" fill="none" stroke="#555" strokeWidth="1.3"><rect x="1" y="1" width="6.5" height="5.5" /><rect x="10.5" y="1" width="6.5" height="5.5" /><rect x="1" y="9.5" width="6.5" height="5.5" /><rect x="10.5" y="9.5" width="6.5" height="5.5" /></svg>
          </ViewBtn>
          <ViewBtn>
            <svg width="17" height="17" viewBox="0 0 17 17" fill="none" stroke="#555" strokeWidth="1.2"><path d="M8.5 3C6.5 1 3 1 1 2V16C3 15 6.5 15 8.5 16C10.5 15 14 15 16 16V2C14 1 10.5 1 8.5 3ZM8.5 3V16M3 5H6.5M3 8H6.5M3 11H6.5M10.5 5H14M10.5 8H14M10.5 11H14" /></svg>
          </ViewBtn>
          <ViewBtn>
            <svg width="17" height="18" viewBox="0 0 17 18" fill="none" stroke="#555" strokeWidth="1.3"><path d="M0 1H17M2 1V10H15V1M8.5 10V17M5 17H12" /><path d="M5 5H12" /></svg>
          </ViewBtn>
          <Sign $ml={7}><svg width="10" height="2" viewBox="0 0 10 2"><path d="M0 1H10" stroke="#444" /></svg></Sign>
          <ZoomTrack><ZoomThumb /><ZoomTick /></ZoomTrack>
          <Sign><svg width="10" height="10" viewBox="0 0 10 10"><path d="M0 5H10M5 0V10" stroke="#444" /></svg></Sign>
          <ZoomPct>82%</ZoomPct>
          <Sign>
            <svg width="18" height="18" viewBox="0 0 18 18" fill="none" stroke="#555"><rect x="5" y="5" width="8" height="8" /><path d="M7 2.5L9 .8L11 2.5M7 15.5L9 17.2L11 15.5M2.5 7L.8 9L2.5 11M15.5 7L17.2 9L15.5 11" /></svg>
          </Sign>
        </StatusRight>
      </StatusBar>

      <Taskbar>
        <TaskTile $mr={8}><WinLogo /></TaskTile>
        <TaskSearch><TaskSearchIcon />Suche</TaskSearch>
        {tasks.map(([icon, run, on], i) => (
          <TaskTile key={i} $on={on}>{icon}{run && <RunDot $on={on} />}</TaskTile>
        ))}
        <Tray>
          <TrayItem $w={36}>
            <svg width="16" height="9" viewBox="0 0 16 9" fill="none" stroke="#222" strokeWidth="1.6"><path d="M1 8L8 1.5L15 8" /></svg>
          </TrayItem>
          <TrayItem $w={40} $ml={3}>
            <svg width="22" height="14" viewBox="0 0 22 14"><path d="M5 14A4.5 4.5 0 014 5A6.5 6.5 0 0116 4A5 5 0 0118 14Z" fill="#0f78d4" /><path d="M8 14L15 7L21 10C23 12 21 14 18 14Z" fill="#28a8ea" /></svg>
          </TrayItem>
          <Lang>DEU<br />DE</Lang>
          <TrayItem $w={30}>
            <svg width="22" height="16" viewBox="0 0 22 16" fill="none" stroke="#222" strokeWidth="1.2"><path d="M1 5C7 -.5 15 -.5 21 5M4.5 8.5C8.5 5 13.5 5 17.5 8.5M8 12C10 10.5 12 10.5 14 12" /><circle cx="11" cy="14.5" r="1" fill="#222" /></svg>
          </TrayItem>
          <TrayItem $w={30}>
            <svg width="20" height="16" viewBox="0 0 20 16" fill="none" stroke="#222" strokeWidth="1.1"><path d="M1 5H4L9 1V15L4 11H1Z" /><path d="M13 5.5L19 11M19 5.5L13 11" /></svg>
          </TrayItem>
          <TrayItem $w={30}>
            <svg width="21" height="14" viewBox="0 0 21 14" fill="none" stroke="#222" strokeWidth="1.2"><rect x=".6" y=".6" width="17" height="12.8" rx="3" /><rect x="3" y="3" width="4" height="8" fill="#222" stroke="none" /><path d="M19.5 5V9" strokeWidth="2" /></svg>
          </TrayItem>
          <Clock>16:13<br />20.04.2023</Clock>
          <Badge>3</Badge>
        </Tray>
      </Taskbar>

      <MediaFlyout>
        <FlyBtn $w={52} $on><IconBox $h={45}><FilmIcon /></IconBox>Video<ChevronLine $h={17}><Chev /></ChevronLine></FlyBtn>
        <FlyBtn $w={54} $ml={1}><IconBox $h={46}><SpeakerIcon s={0.92} /></IconBox>Audio<ChevronLine $h={17}><Chev /></ChevronLine></FlyBtn>
        <FlyBtn $w={160}><IconBox $h={46}><RecordIcon /></IconBox>Bildschirmaufzeichnung</FlyBtn>
      </MediaFlyout>
      <VideoMenu>
        <MenuHead>Video einfügen aus</MenuHead>
        <MenuItem>
          <MenuIcon><MiniFilm><rect x="9" y="7" width="10" height="7" fill="#fff" stroke={BLUE} /><path d="M14 14V17M11 17H17" stroke={BLUE} /></MiniFilm></MenuIcon>
          <span><Accel>D</Accel>ieses Gerät...</span>
        </MenuItem>
        <MenuItem>
          <MenuIcon><MiniFilm><circle cx="12" cy="9" r="3.5" fill="#fff" stroke={BLUE} /><path d="M14.5 11.5L18 15.5" stroke={BLUE} /></MiniFilm></MenuIcon>
          <span><Accel>A</Accel>rchiv-Videos...</span>
        </MenuItem>
        <MenuItem $on>
          <MenuIcon><MiniFilm><circle cx="14" cy="12" r="5.5" fill={BLUE} /><path d="M8.5 12H19.5M14 6.5V17.5M10 9H18M10 15H18" stroke="#fff" strokeWidth=".7" /></MiniFilm></MenuIcon>
          <span><Accel>O</Accel>nlinevideos...</span>
        </MenuItem>
      </VideoMenu>
    </Page>
  );
}
